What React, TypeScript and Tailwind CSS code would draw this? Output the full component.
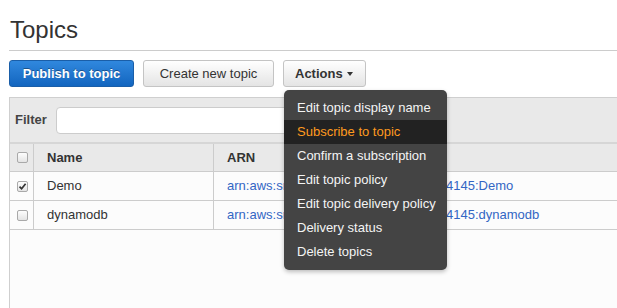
const menuItems = [
  "Edit topic display name",
  "Subscribe to topic",
  "Confirm a subscription",
  "Edit topic policy",
  "Edit topic delivery policy",
  "Delivery status",
  "Delete topics",
];

const topics = [
  { name: "Demo", arn: "arn:aws:sns:ap-northeast-1:273463804145:Demo", checked: true },
  { name: "dynamodb", arn: "arn:aws:sns:ap-northeast-1:273463804145:dynamodb", checked: false },
];

function CheckBox({ checked }: { checked?: boolean }) {
  return (
    <span className="flex h-[11px] w-[11px] items-center justify-center rounded-[2px] border border-[#a9a9a9] bg-linear-to-b from-[#fdfdfd] to-[#e4e4e4]">
      {checked && (
        <svg width="9" height="9" viewBox="0 0 9 9">
          <path d="M1.5 4.6 L3.6 6.8 L7.6 1.8" fill="none" stroke="#333" strokeWidth="1.7" />
        </svg>
      )}
    </span>
  );
}

export default function App() {
  return (
    <div className="relative h-[308px] w-[617px] overflow-hidden bg-white font-['Liberation_Sans',Arial,sans-serif] text-[13px] text-[#333]">
      <div className="pl-[9px]">
        <h1 className="border-b border-[#cccccc] pb-[7px] pl-px pt-[17px] text-[24px] font-normal leading-[26px] text-[#333]">
          Topics
        </h1>

        {/* Buttons */}
        <div className="mt-[9px] flex gap-[9px]">
          <button className="h-[27px] w-[125px] rounded-[3px] border border-[#1a5ea8] bg-linear-to-b from-[#3088de] to-[#1265bf] font-bold text-white [text-shadow:0_-1px_0_rgba(0,0,0,0.35)]">
            Publish to topic
          </button>
          <button className="h-[27px] w-[131px] rounded-[3px] border border-[#c4c4c4] bg-linear-to-b from-white to-[#e4e4e4] text-[#333]">
            Create new topic
          </button>
          <button className="flex h-[27px] w-[83px] items-center rounded-[3px] border border-[#c4c4c4] bg-linear-to-b from-white to-[#e4e4e4] pl-[11px] font-bold text-[#333]">
            Actions
            <span className="ml-[4px] mt-px h-0 w-0 border-x-[3px] border-t-[4px] border-x-transparent border-t-[#333]" />
          </button>
        </div>

        {/* Table panel */}
        <div className="mt-[10px] h-[220px] border-l border-t border-[#cfcfcf] bg-[#fcfcfc]">
          <div className="flex h-[46px] items-center border-b-2 border-[#d6d6d6] bg-[#e9e9e9] pl-[5px]">
            <span className="font-bold text-[#444]">Filter</span>
            <div className="ml-[9px] h-[27px] w-[320px] rounded-[4px] border border-[#cccccc] bg-white" />
          </div>
          <div className="grid h-[28px] grid-cols-[24px_180px_1fr] border-b border-[#cccccc] bg-[#e9e9e9] font-bold">
            <div className="flex items-center justify-center border-r border-[#cccccc] pl-px">
              <CheckBox />
            </div>
            <div className="flex items-center border-r border-[#cccccc] pl-[13px]">Name</div>
            <div className="flex items-center pl-[13px]">ARN</div>
          </div>
          {topics.map((t) => (
            <div key={t.name} className="grid h-[29px] grid-cols-[24px_180px_1fr] border-b border-[#cccccc]">
              <div className="flex items-center justify-center border-r border-[#cccccc] pl-px">
                <CheckBox checked={t.checked} />
              </div>
              <div className="flex items-center border-r border-[#cccccc] pl-[13px]">{t.name}</div>
              <div className="flex items-center whitespace-nowrap pl-[13px] text-[#3366c4]">{t.arn}</div>
            </div>
          ))}
        </div>
      </div>

      {/* Actions dropdown */}
      <div className="absolute left-[284px] top-[90px] w-[163px] rounded-[5px] bg-[#444] pb-[6px] pt-[6px] shadow-[0_2px_4px_rgba(0,0,0,0.25)]">
        {menuItems.map((item) => (
          <div
            key={item}
            className={
              item === "Subscribe to topic"
                ? "h-[24px] bg-[#222] pl-[13px] leading-[23px] text-[#ff9a1f]"
                : "h-[24px] pl-[13px] leading-[23px] text-[#f4f4f4]"
            }
          >
            {item}
          </div>
        ))}
      </div>
    </div>
  );
}
